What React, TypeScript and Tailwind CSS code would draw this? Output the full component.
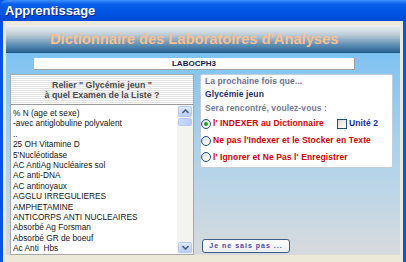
import type React from "react"

const items = [
  "% N (age et sexe)",
  "-avec antiglobuline polyvalent",
  "..",
  "25 OH Vitamine D",
  "5'Nucléotidase",
  "AC AntiAg Nucléaires sol",
  "AC anti-DNA",
  "AC antinoyaux",
  "AGGLU IRREGULIERES",
  "AMPHETAMINE",
  "ANTICORPS ANTI NUCLEAIRES",
  "Absorbé Ag Forsman",
  "Absorbé GR de boeuf",
  "Ac Anti\u00a0 Hbs",
]

const Radio: React.FC<{ checked?: boolean }> = ({ checked }) => (
  <span className="w-[10px] h-[10px] rounded-full border border-[#1c5180] bg-[linear-gradient(135deg,#dcdcd6,#ffffff)] flex items-center justify-center shrink-0">
    {checked && <span className="w-[4px] h-[4px] rounded-full bg-[#21a121]" />}
  </span>
)

const ScrollBtn: React.FC<{ up?: boolean }> = ({ up }) => (
  <div className="h-[11px] rounded-[2px] border border-[#b5c9f2] bg-[linear-gradient(180deg,#dfe9fd,#b9cdf6)] flex items-center justify-center">
    <svg width="7" height="5" viewBox="0 0 7 5">
      <path d={up ? "M0.5 4L3.5 1L6.5 4" : "M0.5 1L3.5 4L6.5 1"} fill="none" stroke="#4d6185" strokeWidth={1.6} />
    </svg>
  </div>
)

const App: React.FC = () => {
  return (
    <div className="w-[406px] h-[262px] overflow-hidden flex flex-col bg-[#0055e5] font-['Liberation_Sans',Arial,sans-serif]">
      <div className="h-[21px] shrink-0 rounded-tl-[6px] bg-[linear-gradient(180deg,#3d95ff_0px,#0a5fea_4px,#0055e5_12px,#0048d6_21px)] flex items-center pl-[5px]">
        <span className="text-white font-bold text-[13px] font-['Liberation_Sans_Narrow','Liberation_Sans',sans-serif] [text-shadow:1px_1px_0_#0a1f80]">
          Apprentissage
        </span>
      </div>

      <div className="flex-1 mx-[3px] bg-[#ece9d8] pt-[4px] px-[3px] pb-[7px] flex flex-col">
        <div className="h-[28px] shrink-0 bg-[linear-gradient(180deg,#eef0f0_0%,#c0ced8_35%,#5a8cb2_75%,#2c6896_100%)] border-b border-[#1d5480] flex items-center pl-[44px] pt-[2px]">
          <span className="text-[#fbbf8c] font-bold text-[14.7px]">
            Dictionnaire des Laboratoires d'Analyses
          </span>
        </div>

        <div className="flex-1 bg-[linear-gradient(180deg,#7ec2f2_0%,#a9d2ee_45%,#d8dadc_100%)] flex flex-col pl-[4px] pr-[7px]">
          <div className="mt-[5px] ml-[24px] w-[321px] h-[12px] bg-white border-r border-b border-[#a0a0a0] flex items-center justify-center">
            <span className="text-[#10204a] font-bold text-[8px] leading-none">LABOCPH3</span>
          </div>

          <div className="flex gap-[6px] mt-[4px] flex-1">
            <div className="w-[184px] flex flex-col border border-[#a8a8a8] bg-white">
              <div className="h-[29px] shrink-0 bg-[repeating-linear-gradient(180deg,#ffffff_0px,#ffffff_1px,#e2e2e2_1px,#e2e2e2_2px)] flex flex-col items-center justify-center text-[#4a4a4a] font-bold text-[8.8px] leading-[10px]">
                <span>Relier " Glycémie jeun "</span>
                <span>à quel Examen de la Liste ?</span>
              </div>
              <div className="flex-1 flex border-t border-[#9a9a9a]">
                <div className="flex-1 pt-[3px] pl-[2px] text-[8.3px] leading-[10.4px] text-[#141414] whitespace-nowrap overflow-hidden">
                  {items.map((it) => (
                    <div key={it}>{it}</div>
                  ))}
                </div>
                <div className="w-[16px] bg-[#f3f3ef] flex flex-col pt-[1px] pb-[1px] px-[1px]">
                  <ScrollBtn up />
                  <div className="mt-[1px] h-[8px] rounded-[2px] border border-[#b5c9f2] bg-[linear-gradient(90deg,#c9dafb,#b7cbf5)]" />
                  <div className="flex-1" />
                  <ScrollBtn />
                </div>
              </div>
            </div>

            <div className="w-[193px] flex flex-col">
              <div className="h-[94px] bg-white border border-[#c4ccd6] rounded-[2px] flex flex-col pl-[4px] text-[8.5px] font-bold tracking-[0.1px]">
                <div className="h-[13px] flex items-center text-[#6a7290]">La prochaine fois que...</div>
                <div className="h-[13px] flex items-center text-[#1f2d6a]">Glycémie jeun</div>
                <div className="h-[14px] flex items-center text-[#727a94]">Sera rencontré, voulez-vous :</div>
                <div className="h-[17px] flex items-center -ml-[4px] text-[#d40000]">
                  <Radio checked />
                  <span className="ml-[2px] w-[124px]">l' INDEXER au Dictionnaire</span>
                  <span className="w-[10px] h-[10px] border border-[#1c5180] bg-[linear-gradient(135deg,#dcdcd6,#ffffff)] shrink-0" />
                  <span className="ml-[2px] text-[#1828a8]">Unité 2</span>
                </div>
                <div className="h-[17px] flex items-center -ml-[4px] text-[#d40000]">
                  <Radio />
                  <span className="ml-[2px]">Ne pas l'Indexer et le Stocker en Texte</span>
                </div>
                <div className="h-[16px] flex items-center -ml-[4px] text-[#d40000]">
                  <Radio />
                  <span className="ml-[2px]">l' Ignorer et Ne Pas l' Enregistrer</span>
                </div>
              </div>
              <div className="flex-1" />
              <div className="mb-[2px] ml-[2px] w-[88px] h-[14px] rounded-[3px] border border-[#3a5f86] bg-[linear-gradient(180deg,#ffffff,#eceef2)] flex items-center justify-center">
                <span className="text-[#5048a8] font-bold text-[7px] tracking-[1px]">Je ne sais pas ...</span>
              </div>
            </div>
          </div>
        </div>
      </div>
    </div>
  )
}

export default App
